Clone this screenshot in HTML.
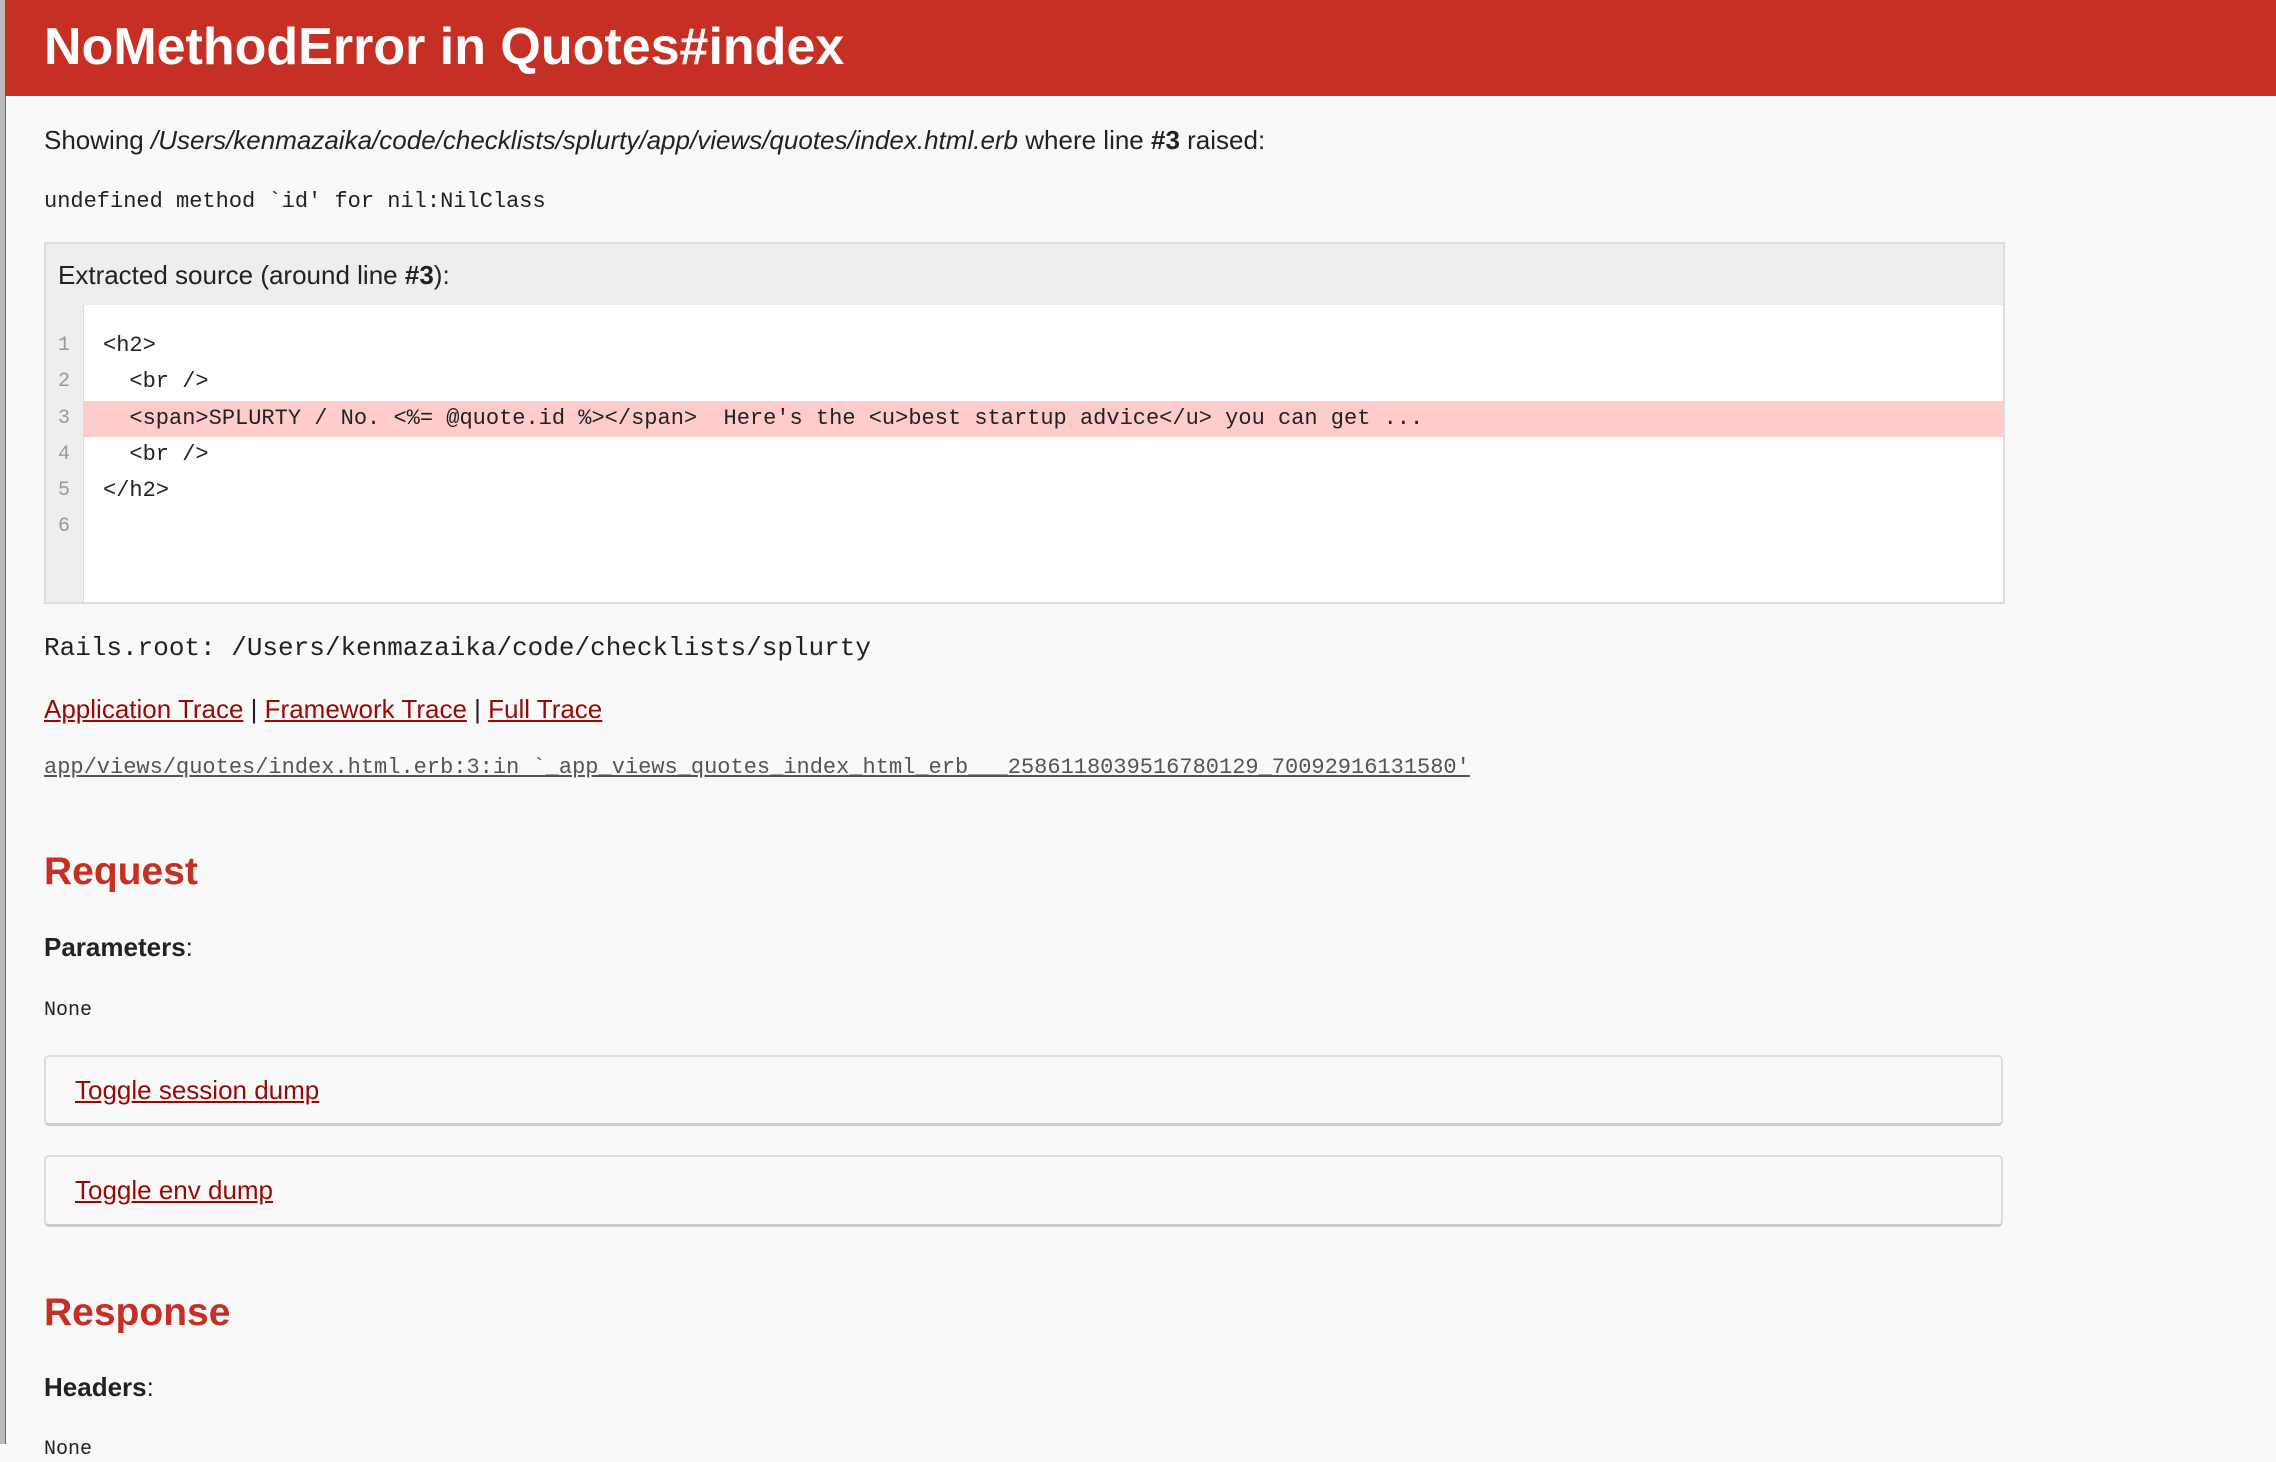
<!DOCTYPE html>
<html><head><meta charset="utf-8"><style>
html,body{margin:0;padding:0;width:2276px;height:1444px;overflow:hidden;background:#f9f9f9;font-family:"Liberation Sans",Arial,sans-serif;color:#333;}
.a{position:absolute;white-space:pre;}
.strip{position:absolute;left:0;top:0;width:5px;height:1444px;background:#bbb;border-right:1px solid #666;}
.hdr{position:absolute;left:5px;top:0;width:2271px;height:96px;background:#c52f24;}
.mono{font-family:"Liberation Mono",monospace;}
a{color:#980905;text-decoration:underline;}
.box{position:absolute;left:44px;width:1955px;border:2px solid #ddd;border-bottom:3px solid #ccc;border-radius:5px;background:#f9f9f9;}
</style></head><body>
<div class="strip"></div>
<div class="hdr"></div>
<div class="a" style="left:44px;top:14px;font-size:52px;font-weight:bold;color:#fff;line-height:66px;">NoMethodError in Quotes#index</div>
<div class="a" style="left:44px;top:125px;font-size:26px;line-height:30px;color:#222;">Showing <i>/Users/kenmazaika/code/checklists/splurty/app/views/quotes/index.html.erb</i> where line <b>#3</b> raised:</div>
<div class="a mono" style="left:44px;top:189px;font-size:22px;line-height:26px;color:#222;">undefined method `id' for nil:NilClass</div>

<div style="position:absolute;left:44px;top:242px;width:1957px;height:358px;border:2px solid #ddd;background:#eee;"></div>
<div class="a" style="left:58px;top:260px;font-size:26px;line-height:30px;color:#222;">Extracted source (around line <b>#3</b>):</div>
<div style="position:absolute;left:46px;top:305px;width:37px;height:297px;background:#eee;border-right:1px solid #ddd;"></div>
<div style="position:absolute;left:84px;top:305px;width:1919px;height:297px;background:#fff;"></div>
<div style="position:absolute;left:84px;top:401px;width:1919px;height:36px;background:#fcc;"></div>
<div class="a mono" style="left:58px;top:328px;font-size:20px;line-height:36.3px;color:#999;">1
2
3
4
5
6</div>
<div class="a mono" style="left:103px;top:328px;font-size:22px;line-height:36.3px;color:#222;">&lt;h2&gt;
  &lt;br /&gt;
  &lt;span&gt;SPLURTY / No. &lt;%= @quote.id %&gt;&lt;/span&gt;  Here's the &lt;u&gt;best startup advice&lt;/u&gt; you can get ...
  &lt;br /&gt;
&lt;/h2&gt;
</div>

<div class="a mono" style="left:44px;top:632px;font-size:26px;line-height:32px;color:#222;">Rails.root: /Users/kenmazaika/code/checklists/splurty</div>
<div class="a" style="left:44px;top:694px;font-size:26px;line-height:30px;color:#222;"><a>Application Trace</a> | <a>Framework Trace</a> | <a>Full Trace</a></div>
<div class="a mono" style="left:44px;top:755px;font-size:22px;line-height:26px;"><a style="color:#555">app/views/quotes/index.html.erb:3:in `_app_views_quotes_index_html_erb___2586118039516780129_70092916131580'</a></div>

<div class="a" style="left:44px;top:848px;font-size:39px;font-weight:bold;color:#c52f24;line-height:48px;">Request</div>
<div class="a" style="left:44px;top:932px;font-size:26px;line-height:30px;color:#222;"><b>Parameters</b>:</div>
<div class="a mono" style="left:44px;top:999px;font-size:20px;line-height:24px;color:#222;">None</div>

<div class="box" style="top:1055px;height:66px;"></div>
<div class="a" style="left:75px;top:1075px;font-size:26px;line-height:30px;"><a>Toggle session dump</a></div>
<div class="box" style="top:1155px;height:67px;"></div>
<div class="a" style="left:75px;top:1175px;font-size:26px;line-height:30px;"><a>Toggle env dump</a></div>

<div class="a" style="left:44px;top:1289px;font-size:39px;font-weight:bold;color:#c52f24;line-height:48px;">Response</div>
<div class="a" style="left:44px;top:1372px;font-size:26px;line-height:30px;color:#222;"><b>Headers</b>:</div>
<div class="a mono" style="left:44px;top:1438px;font-size:20px;line-height:24px;color:#222;">None</div>
</body></html>
